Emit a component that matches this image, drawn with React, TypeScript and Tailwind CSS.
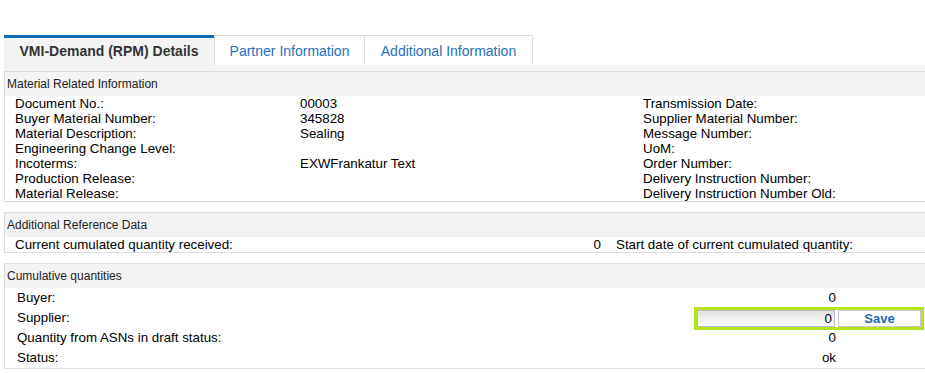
import React from 'react'

const materialRows: [string, string, string][] = [
  ['Document No.:', '00003', 'Transmission Date:'],
  ['Buyer Material Number:', '345828', 'Supplier Material Number:'],
  ['Material Description:', 'Sealing', 'Message Number:'],
  ['Engineering Change Level:', '', 'UoM:'],
  ['Incoterms:', 'EXWFrankatur Text', 'Order Number:'],
  ['Production Release:', '', 'Delivery Instruction Number:'],
  ['Material Release:', '', 'Delivery Instruction Number Old:'],
]

function SectionHeader({ title }: { title: string }) {
  return (
    <div className="h-[24px] bg-[#f3f3f3] pl-[2px] flex items-center text-[12px] text-[#222]">
      {title}
    </div>
  )
}

export default function App() {
  return (
    <div
      className="w-[925px] h-[374px] overflow-hidden bg-white text-black"
      style={{ fontFamily: '"Liberation Sans", Arial, sans-serif' }}
    >
      <div className="pl-1 pt-[35px] w-[940px]">
        {/* tabs */}
        <div className="flex h-[30px]">
          <div className="w-[210px] h-[30px] border-t-[3px] border-[#0b6ab5] bg-[#f3f3f3] flex items-center justify-center text-[14px] font-bold text-[#333]">
            VMI-Demand (RPM) Details
          </div>
          <div className="w-[151px] h-[30px] border-t border-l border-r border-[#dcdcdc] pt-[2px] flex items-center justify-center text-[14px] text-[#2570bd]">
            Partner Information
          </div>
          <div className="w-[168px] h-[30px] border-t border-r border-[#dcdcdc] pt-[2px] flex items-center justify-center text-[14px] text-[#2570bd]">
            Additional Information
          </div>
        </div>
        <div className="h-[6px] bg-[#f3f3f3]" />

        {/* Material Related Information */}
        <div className="border-t border-l border-b border-[#dcdcdc]">
          <SectionHeader title="Material Related Information" />
          <div className="pl-[10px] text-[13.33px] leading-[15px]">
            {materialRows.map(([label, value, right]) => (
              <div key={label} className="grid grid-cols-[285px_343px_1fr] h-[15px]">
                <span>{label}</span>
                <span>{value}</span>
                <span>{right}</span>
              </div>
            ))}
          </div>
        </div>

        {/* Additional Reference Data */}
        <div className="mt-[10px] border-t border-l border-b border-[#dcdcdc]">
          <SectionHeader title="Additional Reference Data" />
          <div className="pl-[10px] text-[13.33px] leading-[15px] grid grid-cols-[586px_1fr] h-[15px]">
            <div className="flex justify-between">
              <span>Current cumulated quantity received:</span>
              <span>0</span>
            </div>
            <span className="pl-[15px]">Start date of current cumulated quantity:</span>
          </div>
        </div>

        {/* Cumulative quantities */}
        <div className="mt-[10px] border-t border-l border-b border-[#dcdcdc]">
          <SectionHeader title="Cumulative quantities" />
          <div className="pl-[12px] text-[13.33px]">
            <div className="flex items-center h-[20px]">
              <span className="flex-1">Buyer:</span>
              <span className="w-[142px] text-right">0</span>
              <span className="w-[104px]" />
            </div>
            <div className="flex items-center h-[20px]">
              <span className="flex-1">Supplier:</span>
              <div className="w-[230px] h-[23px] shrink-0 border-[3px] border-[#b4e31e] flex gap-[3px] mr-[16px]">
                <input
                  defaultValue="0"
                  className="w-[138px] h-[17px] border border-[#b5b9c9] bg-linear-to-b from-[#e0e0e0] to-white px-[2px] text-right text-[13.33px] leading-[15px] outline-none"
                />
                <button className="w-[83px] h-[17px] border border-[#c9c9d2] bg-white text-[13px] font-bold text-[#1c6cb8] leading-[15px]">
                  Save
                </button>
              </div>
            </div>
            <div className="flex items-center h-[20px]">
              <span className="flex-1">Quantity from ASNs in draft status:</span>
              <span className="w-[142px] text-right">0</span>
              <span className="w-[104px]" />
            </div>
            <div className="flex items-center h-[20px]">
              <span className="flex-1">Status:</span>
              <span className="w-[142px] text-right">ok</span>
              <span className="w-[104px]" />
            </div>
          </div>
        </div>
      </div>
    </div>
  )
}
